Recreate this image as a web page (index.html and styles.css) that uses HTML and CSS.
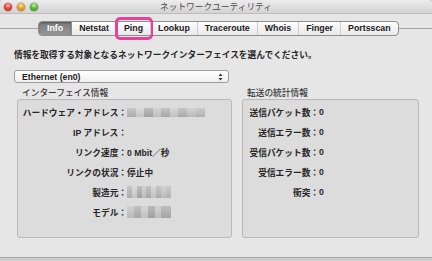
FILE: index.html
```html
<!DOCTYPE html>
<html lang="ja">
<head>
    <meta charset="UTF-8">
    <meta name="viewport" content="width=device-width, initial-scale=1.0">
    <title>ネットワークユーティリティ</title>
    <link rel="stylesheet" href="styles.css">
</head>
<body>
    <div class="window">
        <div class="titlebar">
            <div class="lights">
                <span class="light red"></span>
                <span class="light yellow"></span>
                <span class="light green"></span>
            </div>
            <div class="title">ネットワークユーティリティ</div>
            <div></div>
        </div>

        <div class="tabbar">
            <div class="tabs">
                <span class="tab selected">Info</span>
                <span class="tab">Netstat</span>
                <span class="tab marked">Ping</span>
                <span class="tab">Lookup</span>
                <span class="tab">Traceroute</span>
                <span class="tab">Whois</span>
                <span class="tab">Finger</span>
                <span class="tab">Portsscan</span>
            </div>
        </div>

        <div class="content">
            <p class="prompt">情報を取得する対象となるネットワークインターフェイスを選んでください。</p>

            <div class="popup">
                <span>Ethernet (en0)</span>
                <svg width="5" height="8" viewBox="0 0 5 8">
                    <path d="M2.5 0.5 L4.5 3 L0.5 3 Z M2.5 7.5 L4.5 5 L0.5 5 Z" fill="#333"/>
                </svg>
            </div>

            <div class="groups">
                <div class="group iface">
                    <div class="group-title">インターフェイス情報</div>
                    <div class="box">
                        <div class="row"><span class="label">ハードウェア・アドレス：</span><span class="blur long"></span></div>
                        <div class="row"><span class="label">IP アドレス：</span></div>
                        <div class="row"><span class="label">リンク速度：</span><span class="value">0 Mbit／秒</span></div>
                        <div class="row"><span class="label">リンクの状況：</span><span class="value">停止中</span></div>
                        <div class="row"><span class="label">製造元：</span><span class="blur short"></span></div>
                        <div class="row"><span class="label">モデル：</span><span class="blur short alt"></span></div>
                    </div>
                </div>

                <div class="group stats">
                    <div class="group-title">転送の統計情報</div>
                    <div class="box">
                        <div class="row"><span class="label">送信パケット数：</span><span class="value">0</span></div>
                        <div class="row"><span class="label">送信エラー数：</span><span class="value">0</span></div>
                        <div class="row"><span class="label">受信パケット数：</span><span class="value">0</span></div>
                        <div class="row"><span class="label">受信エラー数：</span><span class="value">0</span></div>
                        <div class="row"><span class="label">衝突：</span><span class="value">0</span></div>
                    </div>
                </div>
            </div>
        </div>
    </div>
</body>
</html>
```

FILE: styles.css
```css
* {
    box-sizing: border-box;
}

body {
    margin: 0;
    background: #cdcdcd;
    font-family: "Liberation Sans", "Noto Sans CJK JP", sans-serif;
    font-size: 8.7px;
    color: #1e1e1e;
}

.window {
    width: 432px;
    height: 258px;
    background: #e6e6e6;
    border-bottom: 1px solid #a9a9a9;
    border-radius: 4px 4px 0 0;
    overflow: hidden;
}

/* title bar */
.titlebar {
    height: 14px;
    display: grid;
    grid-template-columns: 1fr auto 1fr;
    align-items: center;
    background: linear-gradient(#ececec, #d3d3d3);
    border-bottom: 1px solid #bdbdbd;
}

.lights {
    display: flex;
    gap: 5px;
    padding-left: 4px;
}

.light {
    width: 8px;
    height: 8px;
    border-radius: 50%;
    box-shadow: 0 0 0 0.5px rgba(0, 0, 0, 0.35);
}

.light.red {
    background: radial-gradient(circle at 50% 30%, #ffb3a8 0, #e2463f 45%, #b8211c 100%);
}

.light.yellow {
    background: radial-gradient(circle at 50% 30%, #ffe2a0 0, #e3a329 45%, #b8780e 100%);
}

.light.green {
    background: radial-gradient(circle at 50% 30%, #c7f0a8 0, #5fb83a 45%, #2f8a1a 100%);
}

.title {
    font-family: "Noto Sans CJK JP", sans-serif;
    color: #4a4a4a;
    line-height: 12px;
}

/* tab strip */
.tabbar {
    padding-top: 7px;
    background: linear-gradient(#a3a3a3, #a3a3a3) 0 14px / 100% 1px no-repeat;
}

.tabs {
    display: flex;
    margin-left: 38px;
    width: max-content;
    height: 15px;
    border: 1px solid #8f8f8f;
    border-radius: 4px;
    background: linear-gradient(#fdfdfd, #e9e9e9);
}

.tab {
    position: relative;
    padding: 0 7px;
    line-height: 13px;
    font-size: 8.8px;
    font-weight: bold;
    color: #222;
    border-left: 1px solid #cdcdcd;
}

.tab:first-child {
    border-left: none;
    border-radius: 3px 0 0 3px;
}

.tab.selected {
    background: linear-gradient(#7b7b7b, #969696);
    color: #fff;
    box-shadow: inset 0 1px 2px rgba(0, 0, 0, 0.35);
    padding: 0 8px;
}

.tab.selected + .tab {
    border-left-color: #8f8f8f;
}

.tab.marked::after {
    content: "";
    position: absolute;
    top: -5px;
    bottom: -5px;
    left: -2px;
    right: -3px;
    border: 3px solid #e5439b;
    border-radius: 5px;
}

/* body */
.content {
    padding: 13px 0 0 14px;
}

.prompt {
    margin: 0;
    font-family: "Noto Sans CJK JP", sans-serif;
    font-weight: bold;
    color: #262626;
    line-height: 12px;
}

.popup {
    margin-top: 9px;
    width: 215px;
    height: 13px;
    display: flex;
    align-items: center;
    justify-content: space-between;
    padding: 0 5px 0 7px;
    border: 1px solid #9d9d9d;
    border-radius: 3px;
    background: linear-gradient(#ffffff, #efefef);
    font-weight: bold;
}

.groups {
    display: flex;
    gap: 10px;
    margin: 4px 0 0 3px;
}

.group-title {
    font-family: "Noto Sans CJK JP", sans-serif;
    font-weight: 500;
    color: #3c3c3c;
    line-height: 12px;
    padding-left: 5px;
}

.box {
    height: 139px;
    padding-top: 2px;
    border: 1px solid #b9b9b9;
    border-radius: 3px;
    background: #dcdcdc;
}

.iface .box {
    width: 215px;
}

.stats .box {
    width: 177px;
}

.row {
    display: flex;
    align-items: center;
    height: 20px;
    font-weight: bold;
    color: #262626;
}

.label {
    text-align: right;
}

.iface .label {
    width: 109px;
}

.stats .label {
    width: 76px;
}

/* blurred values */
.blur {
    height: 10px;
    background:
        linear-gradient(rgba(255, 255, 255, 0.25), rgba(0, 0, 0, 0.05)),
        linear-gradient(90deg,
            #b4b4b4 0 12%, #cfcfcf 12% 22%, #a9a9a9 22% 33%, #c6c6c6 33% 44%,
            #b0b0b0 44% 55%, #cbcbcb 55% 66%, #b3b3b3 66% 77%, #c4c4c4 77% 88%, #bababa 88% 100%);
}

.blur.long {
    width: 78px;
    height: 9px;
}

.blur.short {
    width: 44px;
    height: 12px;
}

.blur.alt {
    background:
        linear-gradient(rgba(255, 255, 255, 0.2), rgba(0, 0, 0, 0.05)),
        linear-gradient(90deg,
            #c4c4c4 0 15%, #b1b1b1 15% 32%, #cbcbcb 32% 48%, #a8a8a8 48% 64%,
            #c7c7c7 64% 78%, #adadad 78% 100%);
}
```
